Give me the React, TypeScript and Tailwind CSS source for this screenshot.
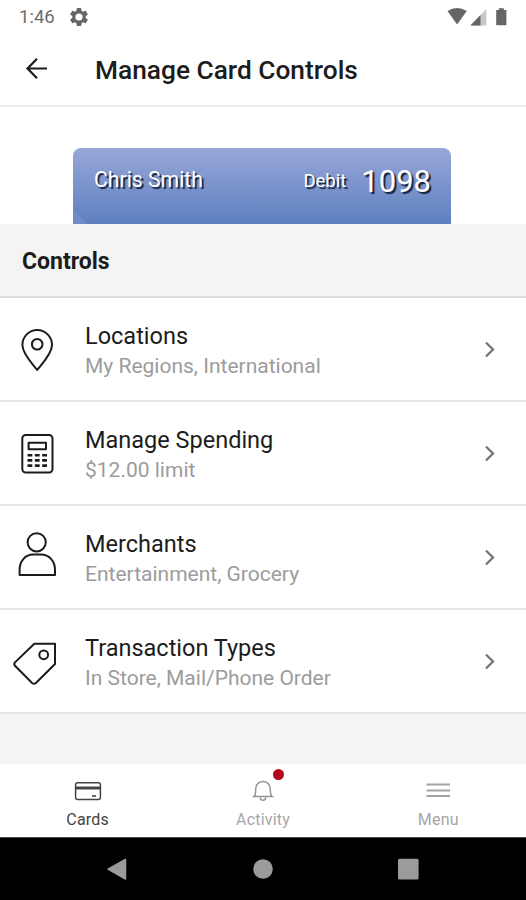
import type { ReactNode } from "react";

type ControlRowProps = {
  title: string;
  detail: string;
  icon: ReactNode;
};

function LocationIcon() {
  return (
    <>
      <path d="M37.2 51C32.5 44.8 22.4 35 22.4 26A14.8 15 0 0 1 52 26C52 35 41.9 44.8 37.2 51Z" />
      <circle cx="37.2" cy="25.2" r="5.3" />
    </>
  );
}

function CalculatorIcon() {
  return (
    <>
      <rect x="22.3" y="11.9" width="30.2" height="37.6" rx="3.5" />
      <rect x="28.6" y="19.7" width="17.4" height="6.6" />
      <path
        d="M27.5 32.2h19.5M27.5 37.4h19.5M27.5 42.6h19.5"
        strokeWidth="2.6"
        strokeDasharray="4.8 2.55"
      />
    </>
  );
}

function PersonIcon() {
  return (
    <>
      <circle cx="36.7" cy="15.3" r="9.1" />
      <path d="M19.6 48V43C19.6 34 25.5 27.6 33 27.6H41C49 27.6 55 34 55 43V48Z" />
    </>
  );
}

function TagIcon() {
  return (
    <>
      <path d="M34.3 12.8H55V33L35.9 52Q34 53.6 32.1 52L15 34.8Q13.5 33.1 15 31.4Z" />
      <circle cx="43.7" cy="23.8" r="4.4" />
    </>
  );
}

const controls: ControlRowProps[] = [
  {
    title: "Locations",
    detail: "My Regions, International",
    icon: <LocationIcon />,
  },
  {
    title: "Manage Spending",
    detail: "$12.00 limit",
    icon: <CalculatorIcon />,
  },
  {
    title: "Merchants",
    detail: "Entertainment, Grocery",
    icon: <PersonIcon />,
  },
  {
    title: "Transaction Types",
    detail: "In Store, Mail/Phone Order",
    icon: <TagIcon />,
  },
];

function ControlRow({ title, detail, icon }: ControlRowProps) {
  return (
    <li className="flex h-[104px] items-center border-b-2 border-[#e4e4e4] bg-white">
      <svg
        viewBox="0 0 60 60"
        className="size-[60px] shrink-0 fill-none stroke-[#1c1c1c]"
        strokeWidth="2"
        strokeLinejoin="round"
      >
        {icon}
      </svg>
      <div className="ml-[25px] min-w-0 flex-1 pt-[3px] whitespace-nowrap">
        <p className="text-[23.5px] leading-[30px] text-[#1c1c1c]">{title}</p>
        <p className="text-[21px] leading-[30px] text-[#9c9c9c]">{detail}</p>
      </div>
      <svg
        viewBox="0 0 16 20"
        className="mr-[28px] h-5 w-4 shrink-0 fill-none stroke-[#777777]"
        strokeWidth="2.3"
      >
        <path d="M4 3.5L11 10.5L4 17.5" />
      </svg>
    </li>
  );
}

function StatusBar() {
  return (
    <div className="flex h-[33px] items-center justify-between pr-[18px] pl-[19px]">
      <div className="flex items-center gap-[15px]">
        <span className="pt-px text-[18.5px] leading-[33px] text-[#6e6e6e]">
          1:46
        </span>
        <svg viewBox="2 2 20 20" className="h-[18px] w-[18px] fill-[#666666]">
          <path
            fillRule="evenodd"
            d="M19.43 12.98c.04-.32.07-.64.07-.98s-.03-.66-.07-.98l2.11-1.65c.19-.15.24-.42.12-.64l-2-3.46c-.12-.22-.39-.3-.61-.22l-2.49 1c-.52-.4-1.08-.73-1.69-.98l-.38-2.65A.49.49 0 0 0 14 2h-4c-.25 0-.46.18-.49.42l-.38 2.65c-.61.25-1.17.59-1.69.98l-2.49-1c-.23-.09-.49 0-.61.22l-2 3.46c-.13.22-.07.49.12.64l2.11 1.65c-.04.32-.07.65-.07.98s.03.66.07.98l-2.11 1.65c-.19.15-.24.42-.12.64l2 3.46c.12.22.39.3.61.22l2.49-1c.52.4 1.08.73 1.69.98l.38 2.65c.03.24.24.42.49.42h4c.25 0 .46-.18.49-.42l.38-2.65c.61-.25 1.17-.59 1.69-.98l2.49 1c.23.09.49 0 .61-.22l2-3.46c.12-.22.07-.49-.12-.64l-2.11-1.65zM12 16a4 4 0 1 1 0-8 4 4 0 0 1 0 8z"
          />
        </svg>
      </div>
      <svg viewBox="0 0 62 20" className="h-5 w-[62px] fill-[#666666]">
        <path d="M1.5 4Q11 -1.8 20.8 4L11.1 17.4Z" />
        <path d="M40.3 2V18.4H24.4Z" fill="#c8c8c8" />
        <path d="M34.5 8V18.4H24.4Z" />
        <path d="M52.8 1.2h5v1.8h2.6v15.2H50.2V3h2.6Z" />
      </svg>
    </div>
  );
}

function BottomTabs() {
  return (
    <nav className="grid h-[73px] grid-cols-3 bg-white text-center text-[16px] leading-5 tracking-[0.2px]">
      <div className="flex flex-col items-center pt-[14px] text-[#444444]">
        <svg
          viewBox="0 0 30 28"
          className="h-[28px] w-[30px] fill-none stroke-current"
          strokeWidth="1.5"
        >
          <rect x="2.6" y="4.8" width="24.8" height="16.7" rx="2" />
          <path d="M2.6 10H27.4" strokeWidth="3" />
          <path d="M19 18H23" strokeWidth="1.6" />
        </svg>
        <span className="mt-1">Cards</span>
      </div>
      <div className="relative flex flex-col items-center pt-[14px] text-[#a6a6a6]">
        <svg
          viewBox="0 0 30 28"
          className="h-[28px] w-[30px] fill-none stroke-[#929292]"
          strokeWidth="1.5"
        >
          <path d="M5.8 18.6H24.2C22.2 17 22.3 15 22.3 11.5C22.3 7 19.5 3.5 15 3.5S7.7 7 7.7 11.5C7.7 15 7.8 17 5.8 18.6Z" />
          <path d="M12.3 19.5C12.3 23 17.7 23 17.7 19.5" />
        </svg>
        <span className="absolute top-[5px] left-[98px] size-[11px] rounded-full bg-[#b3081b]" />
        <span className="mt-1">Activity</span>
      </div>
      <div className="flex flex-col items-center pt-[14px] text-[#a6a6a6]">
        <svg
          viewBox="0 0 30 28"
          className="h-[28px] w-[30px] fill-none stroke-[#a3a3a3]"
          strokeWidth="2"
        >
          <path d="M3.5 6.5H27M3.5 12.5H27M3.5 18H27" />
        </svg>
        <span className="mt-1">Menu</span>
      </div>
    </nav>
  );
}

export default function App() {
  return (
    <div className="flex h-[900px] w-[526px] flex-col overflow-hidden bg-[#f4f4f4] font-[Roboto,sans-serif]">
      <header className="h-[107px] border-b-2 border-[#eeeeee] bg-white">
        <StatusBar />
        <div className="flex h-[72px] items-center">
          <svg
            viewBox="0 0 24 24"
            className="ml-[25px] h-6 w-6 fill-none stroke-[#1c1c1c]"
            strokeWidth="2.2"
          >
            <path d="M12 1.8L2.5 11.5L12 21.2M2.5 11.5H22" />
          </svg>
          <h1 className="ml-[46px] pt-0.5 text-[26.3px] leading-9 font-medium whitespace-nowrap text-[#1c1c1c]">
            Manage Card Controls
          </h1>
        </div>
      </header>

      <section className="flex h-[117px] items-end bg-white pl-[73px]">
        <div className="flex h-[76px] w-[378px] items-start overflow-hidden rounded-t-lg bg-[linear-gradient(45deg,#8c9bd266_9px,transparent_11px),linear-gradient(to_bottom,#98a7d8,#5d80c0)] pr-5 pl-[21px] whitespace-nowrap text-white [text-shadow:2px_2px_1px_#17203a]">
          <span className="flex-1 text-[21.2px] leading-[64px]">
            Chris Smith
          </span>
          <span className="text-[18.5px] leading-[67px]">Debit</span>
          <span className="ml-[15px] text-[31px] leading-[68px]">1098</span>
        </div>
      </section>

      <h2 className="h-[74px] border-b-2 border-[#dddddd] pl-[22px] text-[23px] leading-[76px] font-bold text-[#1c1c1c]">
        Controls
      </h2>
      <ul>
        {controls.map((control) => (
          <ControlRow key={control.title} {...control} />
        ))}
      </ul>

      <div className="flex-1" />
      <BottomTabs />
      <footer className="h-[63px] border-t border-[#4a4a4a] bg-black">
        <svg viewBox="0 0 526 62" className="h-[62px] w-[526px] fill-[#9b9b9b]">
          <path
            d="M125.5 21.5V41L108 31.2Z"
            stroke="#9b9b9b"
            strokeLinejoin="round"
            strokeWidth="1.5"
          />
          <circle cx="263" cy="31" r="9.8" />
          <rect x="398" y="20.8" width="20.6" height="20.6" rx="1.5" />
        </svg>
      </footer>
    </div>
  );
}
